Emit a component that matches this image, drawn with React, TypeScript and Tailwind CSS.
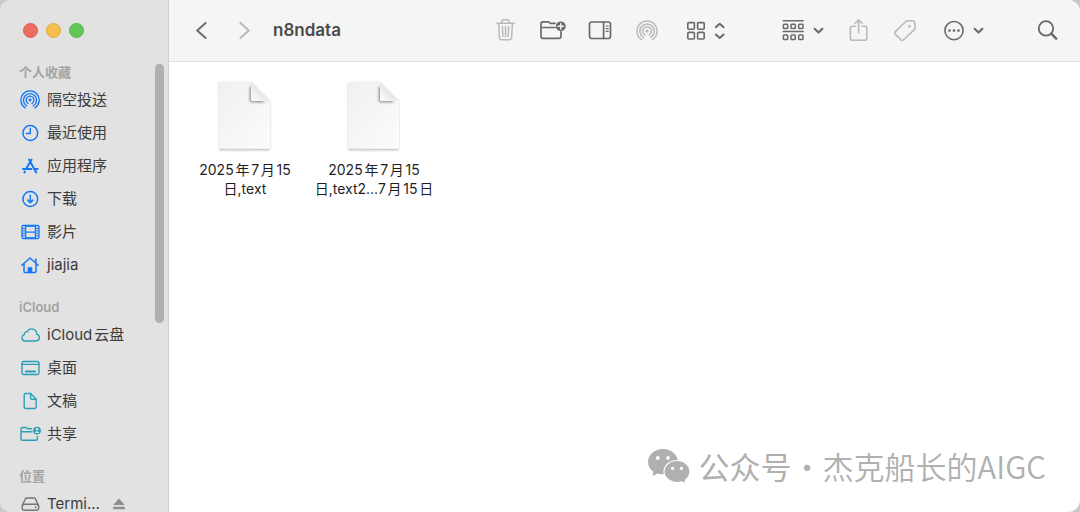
import React from 'react';

type IconProps = { className?: string };

const stroke = {
  fill: 'none',
  stroke: 'currentColor',
  strokeLinecap: 'round' as const,
  strokeLinejoin: 'round' as const,
};

const AirDropIcon = ({ className }: IconProps) => (
  <svg viewBox="0 0 22 22" className={className} {...stroke} strokeWidth="1.5">
    <circle cx="11" cy="11" r="1.6" fill="currentColor" stroke="none" />
    <path d="M8.8 14.8a4.3 4.3 0 1 1 4.4 0" />
    <path d="M7.4 17.4a7.2 7.2 0 1 1 7.2 0" />
    <path d="M5.6 19.6a10.1 10.1 0 1 1 10.8 0" />
  </svg>
);

const ClockIcon = ({ className }: IconProps) => (
  <svg viewBox="0 0 20 20" className={className} {...stroke} strokeWidth="1.5">
    <circle cx="10.3" cy="10" r="7.4" />
    <path d="M10.3 5.4V10.4H6.4" />
  </svg>
);

const AppsIcon = ({ className }: IconProps) => (
  <svg viewBox="0 0 20 20" className={className} {...stroke} strokeWidth="2">
    <path d="M11.6 3.6 6.2 12.8M9 3.6l7.2 12.8M3 12.9h8.4M14.8 12.9h2.8M4.9 15.6l-.5.9" />
  </svg>
);

const DownloadIcon = ({ className }: IconProps) => (
  <svg viewBox="0 0 20 20" className={className} {...stroke} strokeWidth="1.5">
    <circle cx="10.3" cy="10" r="7.4" />
    <path d="M10.3 6.2v7.2M7.8 11.1l2.5 2.5 2.5-2.5" />
  </svg>
);

const FilmIcon = ({ className }: IconProps) => (
  <svg viewBox="0 0 20 20" className={className} {...stroke} strokeWidth="1.3">
    <rect x="2" y="3.5" width="17" height="13" rx="1.4" />
    <path d="M5.6 3.5v13M15.4 3.5v13M5.6 10.2h9.8M5.6 4.2h9.8M5.6 15.8h9.8" />
    <path d="M2.4 6.5h3M2.4 8.9h3M2.4 11.3h3M2.4 13.7h3M15.6 6.5h3M15.6 8.9h3M15.6 11.3h3M15.6 13.7h3" strokeWidth="1" />
  </svg>
);

const HomeIcon = ({ className }: IconProps) => (
  <svg viewBox="0 0 20 20" className={className} {...stroke} strokeWidth="1.5">
    <path d="M1.8 10.3 10 3l8.2 7.3M4 8.8v7.6c0 .6.4 1 1 1h10c.6 0 1-.4 1-1V8.8" />
    <path d="M15.8 4.2v3.4" strokeWidth="1.6" />
    <path d="M8 17.4v-5h4v5z" fill="currentColor" strokeWidth="0.6" />
  </svg>
);

const CloudIcon = ({ className }: IconProps) => (
  <svg viewBox="0 0 20 20" className={className} {...stroke} strokeWidth="1.4">
    <path d="M5 16h11a3.5 3.5 0 0 0 .7-6.9 5 5 0 0 0-9.4-2.5 2.9 2.9 0 0 0-3.1 3A3.3 3.3 0 0 0 5 16z" />
  </svg>
);

const DesktopIcon = ({ className }: IconProps) => (
  <svg viewBox="0 0 20 20" className={className} {...stroke} strokeWidth="1.4">
    <rect x="2" y="3.5" width="17" height="13" rx="1.4" />
    <path d="M2 6.4h17" />
    <path d="M5.8 13.5h9.4" strokeWidth="1.9" />
  </svg>
);

const DocIcon = ({ className }: IconProps) => (
  <svg viewBox="0 0 20 20" className={className} {...stroke} strokeWidth="1.4">
    <path d="M10.6 2.5H5.6c-.8 0-1.4.6-1.4 1.4v12.2c0 .8.6 1.4 1.4 1.4h9.2c.8 0 1.4-.6 1.4-1.4V8.2z" />
    <path d="M10.6 2.5V7c0 .7.5 1.2 1.2 1.2h4.4" />
  </svg>
);

const SharedIcon = ({ className }: IconProps) => (
  <svg viewBox="0 0 20 20" className={`${className} overflow-visible`} {...stroke} strokeWidth="1.4">
    <path d="M11.6 4.8H7.8L6.4 3.5H2.6c-.9 0-1.6.6-1.6 1.5v9.8c0 .9.7 1.5 1.6 1.5h13.2c.9 0 1.6-.6 1.6-1.5v-2.6M1 7.7h11" />
    <circle cx="17" cy="6.6" r="3.9" fill="currentColor" stroke="none" />
    <circle cx="17" cy="5.3" r="1.3" fill="#e2e2e2" stroke="none" />
    <path d="M14.8 9a2.3 2.3 0 0 1 4.4 0z" fill="#e2e2e2" stroke="none" />
  </svg>
);

const DiskIcon = ({ className }: IconProps) => (
  <svg viewBox="0 0 20 20" className={className} {...stroke} strokeWidth="1.4">
    <path d="M2.3 11.6 5.3 5c.3-.7.8-1 1.5-1h7.2c.7 0 1.2.3 1.5 1l3 6.6" />
    <rect x="2.1" y="10.3" width="16.7" height="5.9" rx="2.5" />
    <path d="M15.3 13.3h.8" />
  </svg>
);

const ChevronDown = () => (
  <svg viewBox="0 0 14 14" className="h-3.5 w-3.5" {...stroke} strokeWidth="2.1">
    <path d="M2.6 4.8 6.5 8.6l3.9-3.8" />
  </svg>
);

const FileIcon = () => (
  <svg viewBox="0 0 60 76" className="h-[76px] w-[60px]">
    <defs>
      <linearGradient id="paper" x1="0" y1="0" x2="1" y2="1">
        <stop offset="0" stopColor="#f0f0f0" />
        <stop offset="1" stopColor="#fcfcfc" />
      </linearGradient>
      <linearGradient id="fold" x1="0" y1="1" x2="0.5" y2="0.5">
        <stop offset="0" stopColor="#ffffff" />
        <stop offset="1" stopColor="#e6e6e6" />
      </linearGradient>
      <filter id="soft" x="-20%" y="-20%" width="140%" height="140%">
        <feGaussianBlur stdDeviation="0.8" />
      </filter>
      <filter id="foldShade" x="-50%" y="-50%" width="200%" height="200%">
        <feGaussianBlur stdDeviation="1.7" />
      </filter>
      <clipPath id="page">
        <path d="M6 4h30l19 19v47a2 2 0 0 1-2 2H6a2 2 0 0 1-2-2V6a2 2 0 0 1 2-2z" />
      </clipPath>
    </defs>
    <path
      d="M6 4.5h30l19 19v47a2 2 0 0 1-2 2H6a2 2 0 0 1-2-2V6.5a2 2 0 0 1 2-2z"
      fill="#9a9a9a"
      filter="url(#soft)"
      opacity="0.5"
    />
    <g clipPath="url(#page)">
      <rect x="4" y="4" width="52" height="68" fill="url(#paper)" />
      <path d="M35 9v13.5c0 1 .5 1.5 1.5 1.5H50L36 8z" fill="#555" filter="url(#foldShade)" opacity="0.75" />
      <path d="M4 71.5h52" stroke="#cfcfcf" strokeWidth="1.5" />
    </g>
    <path d="M36 4v17.5a1.5 1.5 0 0 0 1.5 1.5H55z" fill="url(#fold)" />
  </svg>
);

const WeChatIcon = () => (
  <svg viewBox="0 0 44 36" className="h-9 w-11 shrink-0">
    <g fill="#b0b0b0">
      <path d="M16 1C7.5 1 1 6.8 1 14c0 4 2 7.3 5.2 9.7L5.8 28l5-2.6c1.6.6 3.4.9 5.2.9 8.5 0 15-5.4 15-12.3S24.5 1 16 1z" />
      <path
        d="M30 12.5c-7.2 0-13 4.9-13 11s5.800 11 13 11c1.7 0 3.3-.3 4.8-.7l4.4 2-1-3.6c2.900-2 4.800-5.100 4.800-8.700 0-6.100-5.800-11-13-11z"
        stroke="#fff"
        strokeWidth="1.2"
      />
    </g>
    <g fill="#fff">
      <circle cx="10.8" cy="10" r="1.9" />
      <circle cx="21" cy="10" r="1.9" />
      <circle cx="25.6" cy="20.3" r="1.6" />
      <circle cx="34.4" cy="20.3" r="1.6" />
    </g>
  </svg>
);

const sections = [
  {
    title: '个人收藏',
    color: 'text-[#1478f6]',
    items: [
      { icon: AirDropIcon, label: '隔空投送' },
      { icon: ClockIcon, label: '最近使用' },
      { icon: AppsIcon, label: '应用程序' },
      { icon: DownloadIcon, label: '下载' },
      { icon: FilmIcon, label: '影片' },
      { icon: HomeIcon, label: 'jiajia' },
    ],
  },
  {
    title: 'iCloud',
    color: 'text-[#2a9fb8]',
    items: [
      { icon: CloudIcon, label: 'iCloud云盘' },
      { icon: DesktopIcon, label: '桌面' },
      { icon: DocIcon, label: '文稿' },
      { icon: SharedIcon, label: '共享' },
    ],
  },
  {
    title: '位置',
    color: 'text-[#757575]',
    items: [{ icon: DiskIcon, label: 'Termi...', eject: true }],
  },
];

const files = [
  ['2025年7月15', '日,text'],
  ['2025年7月15', '日,text2...7月15日'],
];

const Sidebar: React.FC = () => (
  <aside className="relative w-[169px] shrink-0 overflow-hidden border-r border-[#cfcfcf] bg-[#e2e2e2]">
    {/* Traffic lights */}
    <div className="flex h-[62px] items-center gap-2 pb-px pl-[23px]">
      <button aria-label="关闭" className="h-[15px] w-[15px] rounded-full border border-[#dc5e53] bg-[#ed6b60]" />
      <button aria-label="最小化" className="h-[15px] w-[15px] rounded-full border border-[#dfa940] bg-[#f5bf4f]" />
      <button aria-label="缩放" className="h-[15px] w-[15px] rounded-full border border-[#56b548] bg-[#61c654]" />
    </div>

    <nav className="flex flex-col gap-4">
      {sections.map((section) => (
        <div key={section.title}>
          <h2 className="pb-px pl-[19px] text-[13px] leading-5 font-semibold text-[#a3a3a3]">{section.title}</h2>
          <ul>
            {section.items.map((item) => (
              <li key={item.label} className="flex h-[33px] items-center">
                <a href="#" className="flex items-center gap-[7px] pl-5 text-[15px] leading-[15px] text-[#3c3c3c]">
                  <item.icon className={`h-5 w-5 ${section.color}`} />
                  {item.label}
                </a>
                {'eject' in item && (
                  <button aria-label="推出" className="ml-3 text-[#8e8e8e]">
                    <svg viewBox="0 0 14 14" className="h-3.5 w-3.5" fill="currentColor">
                      <path d="M7 1.5 12.8 8H1.2zM1.2 9.7h11.6v2.5H1.2z" />
                    </svg>
                  </button>
                )}
              </li>
            ))}
          </ul>
        </div>
      ))}
    </nav>

    {/* Scrollbar */}
    <div className="absolute top-16 right-1 h-[259px] w-[9px] rounded-full bg-[#b0b0b0]" />
  </aside>
);

const Toolbar: React.FC = () => (
  <header className="flex h-[62px] shrink-0 items-center border-b border-[#dedede] bg-[#f5f5f5] pr-[18px] pl-[22px] text-[#6a6a6a]">
    <button aria-label="返回">
      <svg viewBox="0 0 22 22" className="h-[22px] w-[22px]" {...stroke} strokeWidth="1.9">
        <path d="M14.6 3 6.2 10.5l8.4 7.5" />
      </svg>
    </button>
    <button aria-label="前进" className="ml-5 text-[#b8b8b8]">
      <svg viewBox="0 0 22 22" className="h-[22px] w-[22px]" {...stroke} strokeWidth="1.9">
        <path d="m7.4 3 8.4 7.5L7.4 18" />
      </svg>
    </button>
    <h1 className="ml-[18px] flex-1 text-[17px] font-semibold text-[#4a4a4a]">n8ndata</h1>

    <div className="flex items-center gap-[19px]">
      <button aria-label="删除" className="text-[#b9b9b9]">
        <svg viewBox="0 0 28 28" className="h-7 w-7" {...stroke} strokeWidth="1.5">
          <path d="M4.8 6.2h17.4M9.8 6V4.4c0-1 .6-1.6 1.6-1.6h4.2c1 0 1.6.6 1.6 1.6V6M6.6 6.4l.8 14.6c.1 1.1.8 1.8 1.9 1.8h8.4c1.1 0 1.8-.7 1.9-1.8l.8-14.6M10.4 9.6l.4 9.8M13.5 9.6v9.8M16.6 9.6l-.4 9.8" />
        </svg>
      </button>
      <button aria-label="新建文件夹">
        <svg viewBox="0 0 28 28" className="h-7 w-7" {...stroke} strokeWidth="1.7">
          <path d="M16 6.4h-4.6L9.5 4.8H4.2C2.9 4.8 2 5.7 2 7v12.2c0 1.3.9 2.2 2.2 2.2h15.6c1.3 0 2.2-.9 2.2-2.2v-4.3M2 10.5h14" />
          <circle cx="21.8" cy="9.3" r="4.9" fill="currentColor" stroke="none" />
          <path d="M21.8 6.6V12M19.1 9.3h5.4" stroke="#f5f5f5" strokeWidth="1.4" />
        </svg>
      </button>
      <button aria-label="预览">
        <svg viewBox="0 0 28 28" className="h-7 w-7" {...stroke} strokeWidth="1.7">
          <rect x="3.5" y="5" width="21" height="16.5" rx="2.3" />
          <path d="M17.6 5v16.5" />
          <path d="M20.2 9h2M20.2 11.7h2M20.2 14.4h2" strokeWidth="1.2" />
        </svg>
      </button>
      <button aria-label="隔空投送" className="flex w-7 justify-center text-[#b9b9b9]">
        <AirDropIcon className="h-[22px] w-[22px]" />
      </button>
      <button aria-label="显示方式" className="flex items-center gap-2 pl-1.5">
        <svg viewBox="0 0 20 20" className="h-5 w-5" {...stroke} strokeWidth="1.6">
          <rect x="1.8" y="1.6" width="6.6" height="6.6" rx="1" />
          <rect x="11.6" y="1.6" width="6.6" height="6.6" rx="1" />
          <rect x="1.8" y="11.4" width="6.6" height="6.6" rx="1" />
          <rect x="11.6" y="11.4" width="6.6" height="6.6" rx="1" />
        </svg>
        <svg viewBox="0 0 12 20" className="h-5 w-3" {...stroke} strokeWidth="2">
          <path d="M1.8 6.2 5.7 2.7l3.9 3.5M1.8 13.6l3.9 3.5 3.9-3.5" />
        </svg>
      </button>
    </div>

    <div className="ml-[55px] flex items-center gap-[19px]">
      <button aria-label="分组" className="flex items-center gap-[7px]">
        <svg viewBox="0 0 24 24" className="h-6 w-6" {...stroke} strokeWidth="1.5">
          <path d="M2.2 1.7h20M2.2 12.4h20" />
          <rect x="2.4" y="5.2" width="4.3" height="4.4" rx=".8" />
          <rect x="10.05" y="5.2" width="4.3" height="4.4" rx=".8" />
          <rect x="17.7" y="5.2" width="4.3" height="4.4" rx=".8" />
          <rect x="2.4" y="16" width="4.3" height="4.6" rx=".8" />
          <rect x="10.05" y="16" width="4.3" height="4.6" rx=".8" />
          <rect x="17.7" y="16" width="4.3" height="4.6" rx=".8" />
        </svg>
        <ChevronDown />
      </button>
      <button aria-label="共享" className="text-[#b9b9b9]">
        <svg viewBox="0 0 28 28" className="h-7 w-7" {...stroke} strokeWidth="1.6">
          <path d="M10.2 9.2H7.4c-1.3 0-2 .7-2 2v10.1c0 1.3.7 2 2 2h12.4c1.3 0 2-.7 2-2V11.2c0-1.3-.7-2-2-2h-2.8M13.6 15.8V3.1M10.2 6.3l3.4-3.4L17 6.3" />
        </svg>
      </button>
      <button aria-label="标签" className="text-[#b9b9b9]">
        <svg viewBox="0 0 28 28" className="h-7 w-7" {...stroke} strokeWidth="1.6">
          <path d="M14 4.3 3.2 14.9c-.7.7-.7 1.5 0 2.2l5.9 5.9c.7.7 1.5.7 2.2 0L22.3 12.6c.5-.5.7-1 .7-1.7V6.8c0-2-1.1-3-3.1-3h-4.2c-.7 0-1.2.1-1.7.5z" />
          <circle cx="17.5" cy="9.2" r="1.2" fill="currentColor" stroke="none" />
        </svg>
      </button>
      <button aria-label="更多" className="flex items-center gap-[7px] pl-1">
        <svg viewBox="0 0 22 22" className="h-[22px] w-[22px]" {...stroke} strokeWidth="1.6">
          <circle cx="11" cy="10.6" r="9.1" />
          <g fill="currentColor" stroke="none">
            <circle cx="6.5" cy="10.6" r="1.3" />
            <circle cx="11" cy="10.6" r="1.3" />
            <circle cx="15.5" cy="10.6" r="1.3" />
          </g>
        </svg>
        <ChevronDown />
      </button>
    </div>

    <button aria-label="搜索" className="ml-12">
      <svg viewBox="0 0 28 28" className="h-7 w-7" {...stroke} strokeWidth="1.8">
        <circle cx="12" cy="11.4" r="7.2" />
        <path d="m17.6 17 4.6 4.6" strokeWidth="2.5" />
      </svg>
    </button>
  </header>
);

const App: React.FC = () => {
  return (
    <div className="h-screen bg-[#c9c9d2] font-['Inter','Noto_Sans_CJK_SC',sans-serif] [text-autospace:normal]">
      <div className="flex h-full overflow-hidden rounded-xl bg-white">
        <Sidebar />

        <main className="relative flex min-w-0 flex-1 flex-col">
          <Toolbar />

          <ul className="flex flex-wrap gap-[9px] px-4 pt-4">
            {files.map(([first, second]) => (
              <li key={second} className="flex w-[120px] flex-col items-center">
                <FileIcon />
                <p className="mt-1.5 text-center text-[14px] leading-[19px] whitespace-nowrap text-[#1f1f1f]">
                  {first}
                  <br />
                  {second}
                </p>
              </li>
            ))}
          </ul>

          {/* Watermark */}
          <div className="absolute right-[34px] bottom-[26px] flex items-center gap-2 font-['Noto_Sans_CJK_SC',sans-serif] text-[31px] leading-10 whitespace-nowrap text-[#b0b0b0] [text-autospace:no-autospace]">
            <WeChatIcon />
            <p>
              公众号<span className="font-[350]">·杰克船长的AIGC</span>
            </p>
          </div>
        </main>
      </div>
    </div>
  );
};

export default App;
